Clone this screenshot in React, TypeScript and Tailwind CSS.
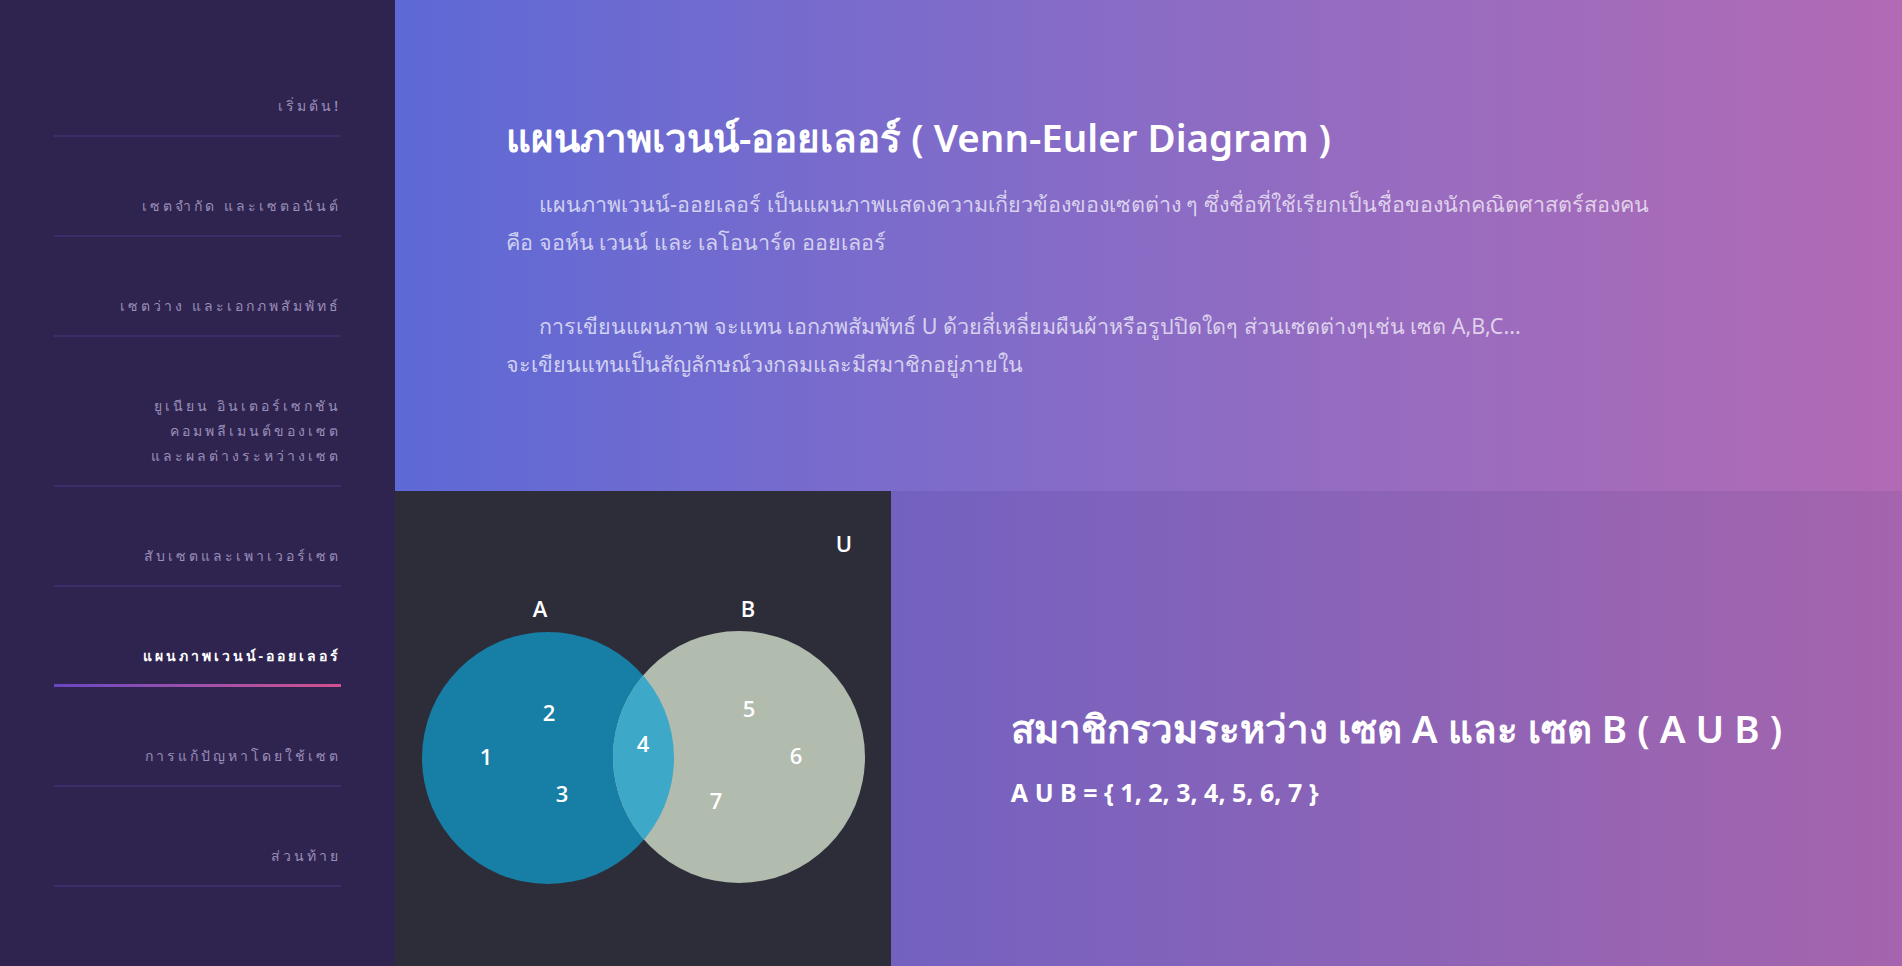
const navItems = [
  { label: ["เริ่มต้น!"] },
  { label: ["เซตจำกัด และเซตอนันต์"] },
  { label: ["เซตว่าง และเอกภพสัมพัทธ์"] },
  { label: ["ยูเนียน อินเตอร์เซกชัน", "คอมพลีเมนต์ของเซต", "และผลต่างระหว่างเซต"] },
  { label: ["สับเซตและเพาเวอร์เซต"] },
  { label: ["แผนภาพเวนน์-ออยเลอร์"], active: true },
  { label: ["การแก้ปัญหาโดยใช้เซต"] },
  { label: ["ส่วนท้าย"] },
];

function Sidebar() {
  return (
    <aside className="w-[395px] shrink-0 bg-[#2f2450] pt-[37px] px-[54px]">
      <nav className="flex flex-col">
        {navItems.map((item, i) => (
          <div key={i} className="relative pt-[56px] pb-[19px] text-right">
            <div
              className={`text-[14px] leading-[25px] tracking-[3px] ${
                item.active ? "text-white font-bold" : "text-[#9a8fb8] font-medium"
              }`}
            >
              {item.label.map((line, j) => (
                <div key={j}>{line}</div>
              ))}
            </div>
            <div
              className={`absolute left-0 right-0 bottom-0 ${
                item.active
                  ? "h-[3px] bg-gradient-to-r from-[#6a45c4] to-[#d2508e]"
                  : "h-[2px] bg-[#3b2e68]"
              }`}
            />
          </div>
        ))}
      </nav>
    </aside>
  );
}

function Venn() {
  return (
    <div className="w-[496px] shrink-0 bg-[#2d2d3a]">
      <svg width="496" height="475" viewBox="0 0 496 475">
        <circle cx="153" cy="267" r="126" fill="#177ea5" />
        <circle cx="344" cy="266" r="126" fill="#b1bbae" />
        <clipPath id="clipA">
          <circle cx="153" cy="267" r="126" />
        </clipPath>
        <circle cx="344" cy="266" r="126" fill="#3ea8c8" clipPath="url(#clipA)" />
        <g
          fill="#ffffff"
          fontFamily="'Open Sans', sans-serif"
          fontWeight="600"
          fontSize="22"
          textAnchor="middle"
          dominantBaseline="central"
        >
          <text x="145" y="117">A</text>
          <text x="353" y="117">B</text>
          <text x="449" y="52">U</text>
          <text x="91" y="265">1</text>
          <text x="154" y="221">2</text>
          <text x="167" y="302">3</text>
          <text x="248" y="252">4</text>
          <text x="354" y="217">5</text>
          <text x="401" y="264">6</text>
          <text x="321" y="309">7</text>
        </g>
      </svg>
    </div>
  );
}

export default function App() {
  return (
    <div
      className="flex h-[966px] w-full overflow-hidden"
      style={{ fontFamily: "'Noto Sans', 'DejaVu Sans', sans-serif" }}
    >
      <Sidebar />
      <main className="flex-1 flex flex-col">
        <section className="h-[491px] bg-gradient-to-r from-[#5d69d6] to-[#b26ab4] pl-[111px] pt-[112px] pr-[40px]">
          <h1 className="text-[38.5px] leading-[50px] font-semibold text-white">
            แผนภาพเวนน์-ออยเลอร์ ( Venn-Euler Diagram )
          </h1>
          <div className="mt-[23px] text-[21.5px] leading-[38px] text-white/70">
            <p>
              <span className="inline-block w-[33px]" />
              แผนภาพเวนน์-ออยเลอร์ เป็นแผนภาพแสดงความเกี่ยวข้องของเซตต่าง ๆ ซึ่งชื่อที่ใช้เรียกเป็นชื่อของนักคณิตศาสตร์สองคน
              <br />
              คือ จอห์น เวนน์ และ เลโอนาร์ด ออยเลอร์
            </p>
            <p className="mt-[46px]">
              <span className="inline-block w-[33px]" />
              การเขียนแผนภาพ จะแทน เอกภพสัมพัทธ์ U ด้วยสี่เหลี่ยมผืนผ้าหรือรูปปิดใดๆ ส่วนเซตต่างๆเช่น เซต A,B,C...
              <br />
              จะเขียนแทนเป็นสัญลักษณ์วงกลมและมีสมาชิกอยู่ภายใน
            </p>
          </div>
        </section>
        <section className="flex-1 flex">
          <Venn />
          <div className="flex-1 flex items-center justify-center bg-gradient-to-r from-[#7361c0] to-[#a564ad]">
            <div className="pt-[54px]">
              <h2 className="text-[38.5px] leading-[50px] font-semibold text-white">
                สมาชิกรวมระหว่าง เซต A และ เซต B ( A U B )
              </h2>
              <p className="mt-[23px] text-[25px] leading-[32px] font-bold text-white">
                A U B = {"{"} 1, 2, 3, 4, 5, 6, 7 {"}"}
              </p>
            </div>
          </div>
        </section>
      </main>
    </div>
  );
}
